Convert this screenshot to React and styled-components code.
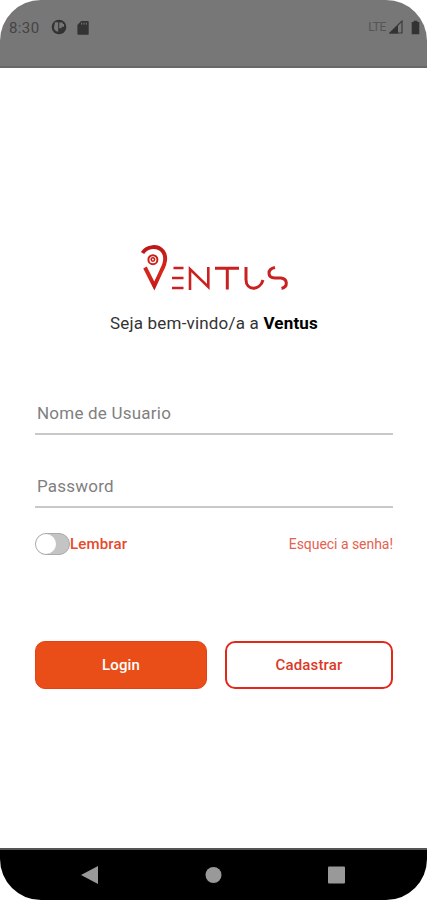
import React from "react";
import styled, { createGlobalStyle } from "styled-components";

const GlobalStyle = createGlobalStyle`
  * { box-sizing: border-box; }
  body { margin: 0; background: #fff; font-family: Roboto, sans-serif; }
`;

const Phone = styled.div`
  width: 427px;
  height: 900px;
  display: flex;
  flex-direction: column;
  background: #fff;
  border-radius: 41px;
  overflow: hidden;
`;

const StatusBar = styled.header`
  height: 68px;
  flex: none;
  display: flex;
  justify-content: space-between;
  align-items: flex-start;
  padding: 17px 7px 0 9px;
  background: #777;
  border-bottom: 2px solid #686868;
  color: #444;
`;

const StatusGroup = styled.div`
  display: flex;
  align-items: center;
  height: 20px;
`;

const Clock = styled.span`
  width: 41px;
  padding-top: 2px;
  font-size: 15px;
  letter-spacing: 0.4px;
`;

const Network = styled.span`
  font-size: 12px;
  letter-spacing: -0.4px;
  color: #555;
  margin-right: 3px;
`;

const StatusIcon = styled.svg`
  display: block;
  margin-left: ${({ $gap }) => $gap || 0}px;
`;

const Content = styled.main`
  flex: 1;
  display: flex;
  flex-direction: column;
  padding: 175px 34px 0 35px;
`;

const Logo = styled.svg`
  display: block;
  margin-left: 103px;
  flex: none;
`;

const Welcome = styled.p`
  margin: 17px 0 0;
  padding-left: 75px;
  font-size: 17px;
  line-height: 22px;
  letter-spacing: 0.19px;
  white-space: nowrap;
  color: #333;

  strong { color: #000; font-weight: 700; }
`;

const Fields = styled.div`
  display: flex;
  flex-direction: column;
  gap: 30px;
  margin-top: 58px;
`;

const Field = styled.input`
  width: 100%;
  height: 43px;
  padding: 1px 2px 0;
  border: 0;
  border-bottom: 2px solid #c8c8c8;
  border-radius: 0;
  outline: 0;
  background: transparent;
  font: 400 17px Roboto, sans-serif;
  letter-spacing: 0.22px;
  color: #333;

  &::placeholder { color: #808080; opacity: 1; }
`;

const Options = styled.div`
  display: flex;
  align-items: center;
  height: 24px;
  margin-top: 24px;
`;

const Toggle = styled.button`
  display: flex;
  align-items: center;
  width: 35px;
  height: 22px;
  padding: 0;
  border: 1.5px solid #aaa;
  border-radius: 11px;
  background: #c4c4c4;
`;

const Knob = styled.span`
  width: 20px;
  height: 20px;
  flex: none;
  border-radius: 50%;
  background: #fff;
`;

const Remember = styled.span`
  font-size: 15px;
  font-weight: 500;
  letter-spacing: 0.15px;
  color: #e8472b;
`;

const Forgot = styled.a`
  margin-left: auto;
  font-size: 14px;
  letter-spacing: -0.04px;
  color: #e56150;
`;

const Actions = styled.div`
  display: grid;
  grid-template-columns: 172px 168px;
  justify-content: space-between;
  margin-top: 85px;
`;

const Button = styled.button`
  height: 48px;
  padding: 0 0 1px;
  border: ${({ $filled }) => ($filled ? "1px solid #e84012" : "2px solid #e12819")};
  border-radius: 10px;
  background: ${({ $filled }) => ($filled ? "#e94e19" : "#fff")};
  color: ${({ $filled }) => ($filled ? "#fff" : "#dd3827")};
  font: 500 15px Roboto, sans-serif;
  letter-spacing: 0.15px;
`;

const NavBar = styled.nav`
  height: 52px;
  flex: none;
  display: flex;
  justify-content: space-between;
  padding: 16px 82px 0 81px;
  background: #000;
  border-top: 2px solid #555;
`;

export default function App() {
  return (
    <>
      <GlobalStyle />
      <Phone>
        <StatusBar>
          <StatusGroup>
            <Clock>8:30</Clock>
            <StatusIcon width="16" height="16" viewBox="0 0 16 16" $gap={1}>
              <circle cx="8" cy="8" r="7.3" fill="#333" />
              <path d="M4 3.200h3.200v9.600C4.500 12.400 3 10.600 3 8.200zM8.300 3.400h3.400v1.700H13v2.700h-2.400v1.400H8.300z" fill="#777" />
            </StatusIcon>
            <StatusIcon width="12" height="15" viewBox="0 0 12 15" $gap={10}>
              <path d="M4.200 1H11q.7 0 .7.8V14q0 .8-.8.8H1.200q-.8 0-.8-.8V5z" fill="#333" />
              <path d="M4.700 2.600v2M7 2.600v2M9.300 2.600v2" stroke="#777" />
            </StatusIcon>
          </StatusGroup>
          <StatusGroup>
            <Network>LTE</Network>
            <StatusIcon width="14" height="14" viewBox="0 0 14 14">
              <path d="M1 13 13 1v12z" fill="#777" stroke="#3c3c3c" strokeWidth="1.2" />
              <path d="M0 13.600 9 5v8.600z" fill="#333" />
            </StatusIcon>
            <StatusIcon width="9" height="15" viewBox="0 0 9 15" $gap={8}>
              <path d="M2.700.8h3.600V2h2v12.300H.7V2h2z" fill="#333" />
            </StatusIcon>
          </StatusGroup>
        </StatusBar>

        <Content>
          <Logo width="152" height="52" viewBox="138 243 152 52" fill="none" role="img" aria-label="Ventus">
            <defs>
              <linearGradient id="brand" gradientUnits="userSpaceOnUse" x1="140" y1="244" x2="150" y2="292">
                <stop offset="0" stopColor="#b91418" />
                <stop offset="0.65" stopColor="#d8281c" />
                <stop offset="1" stopColor="#bd1519" />
              </linearGradient>
            </defs>
            <g stroke="url(#brand)">
              <path d="M142.500 253C147 245.800 158 245 163 251.500C167 257 165 264 161.500 270.500L154.300 286L145 267.500" strokeWidth="3.900" />
              <circle cx="152.900" cy="259.700" r="4.500" strokeWidth="2" />
              <circle cx="152.900" cy="259.500" r="1.700" strokeWidth="1.600" />
            </g>
            <g stroke="#c82120" strokeWidth="2.600">
              <path d="M173.500 268H183.500M172 278H183.500M172 288H183.500" />
              <path d="M190 290V269L208.300 287V267" />
              <path d="M215 268.200H239M227.300 268V289.500" strokeWidth="3" />
              <path d="M246 267V279.500C246 291 260 291 263 280" strokeWidth="3" />
              <path d="M275 267.500C267 269 267 277.500 275 278H281C288 279 288 287 281.500 288.500" strokeWidth="3" />
            </g>
          </Logo>
          <Welcome>Seja bem-vindo/a a <strong>Ventus</strong></Welcome>
          <Fields>
            <Field placeholder="Nome de Usuario" aria-label="Nome de Usuario" />
            <Field type="password" placeholder="Password" aria-label="Password" />
          </Fields>
          <Options>
            <Toggle role="switch" aria-checked="false" aria-label="Lembrar"><Knob /></Toggle>
            <Remember>Lembrar</Remember>
            <Forgot>Esqueci a senha!</Forgot>
          </Options>
          <Actions>
            <Button $filled>Login</Button>
            <Button>Cadastrar</Button>
          </Actions>
        </Content>

        <NavBar>
          <svg width="17" height="18" viewBox="0 0 17 18"><path d="M0 9 17 0v18z" fill="#999" /></svg>
          <svg width="17" height="18" viewBox="0 0 17 18"><circle cx="8.500" cy="9" r="8" fill="#999" /></svg>
          <svg width="17" height="18" viewBox="0 0 17 18"><rect y="0.500" width="17" height="17" rx="1" fill="#999" /></svg>
        </NavBar>
      </Phone>
    </>
  );
}
